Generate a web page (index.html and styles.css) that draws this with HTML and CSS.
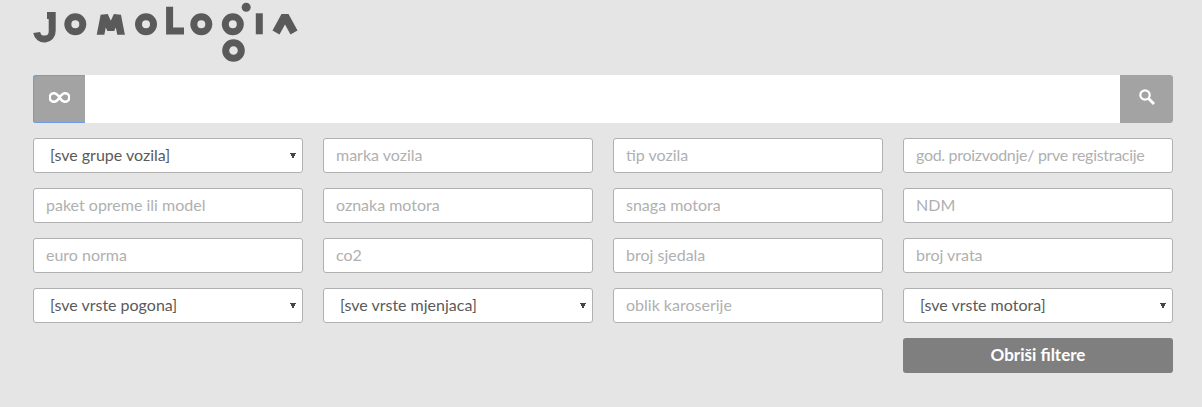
FILE: index.html
```html
<!DOCTYPE html>
<html lang="hr">
<head>
<meta charset="utf-8">
<title>Jomologija</title>
<link rel="stylesheet" href="styles.css">
</head>
<body>
<div class="page">
  <header class="brand">
    <svg class="logo" width="266" height="62" viewBox="0 0 266 62" role="img" aria-label="Jomologija">
      <defs><clipPath id="m-clip"><rect x="60" y="10" width="36" height="24.800"/></clipPath></defs>
      <g fill="none" stroke="#5a5a5a" stroke-width="7">
        <path d="M14 15.500H19.200V31a7.800 7.800 0 0 1-15.500 1.500"/>
        <circle cx="42.300" cy="24.200" r="7.500"/>
        <path clip-path="url(#m-clip)" stroke-linejoin="bevel" stroke-width="7.500" d="M66.500 40L71.300 15.500L77.800 29.500L84.300 15.500L89.100 40"/>
        <circle cx="113" cy="24.200" r="7.500"/>
        <path d="M136.600 6.700V31H151"/>
        <circle cx="168.300" cy="24.200" r="7.500"/>
        <circle cx="199.800" cy="24.200" r="7.500"/>
        <circle cx="200.500" cy="50.500" r="7.800"/>
        <path d="M226.300 13.300V34.300"/>
        <path stroke-linejoin="bevel" stroke-width="8" d="M243 32.500L252 16L261 32.500"/>
      </g>
      <circle cx="213.200" cy="7.200" r="4.500" fill="#5a5a5a"/>
    </svg>
  </header>

  <div class="search">
    <button class="search-mode" type="button" aria-label="Sve">
      <svg width="21" height="11" viewBox="0 0 21 11"><path d="M10.500 5.500C8.500 2.500 7 1.200 5 1.200a4.300 4.300 0 0 0 0 8.600C7 9.800 8.500 8.500 10.500 5.500C12.500 2.500 14 1.200 16 1.200a4.300 4.300 0 0 1 0 8.600C14 9.800 12.500 8.500 10.500 5.500Z" fill="none" stroke="#fff" stroke-width="2.500"/></svg>
    </button>
    <input class="search-input" type="text">
    <button class="search-go" type="button" aria-label="Traži">
      <svg width="16" height="16" viewBox="0 0 16 16"><circle cx="6" cy="6" r="4.700" fill="none" stroke="#fff" stroke-width="2.200"/><path d="M9.500 9.500L15 15" stroke="#fff" stroke-width="2.800"/></svg>
    </button>
  </div>

  <form class="filters">
    <select class="field field-select"><option>[sve grupe vozila]</option></select>
    <input class="field" placeholder="marka vozila">
    <input class="field" placeholder="tip vozila">
    <input class="field field-tight" placeholder="god. proizvodnje/ prve registracije">
    <input class="field" placeholder="paket opreme ili model">
    <input class="field" placeholder="oznaka motora">
    <input class="field" placeholder="snaga motora">
    <input class="field" placeholder="NDM">
    <input class="field" placeholder="euro norma">
    <input class="field" placeholder="co2">
    <input class="field" placeholder="broj sjedala">
    <input class="field" placeholder="broj vrata">
    <select class="field field-select"><option>[sve vrste pogona]</option></select>
    <select class="field field-select"><option>[sve vrste mjenjaca]</option></select>
    <input class="field" placeholder="oblik karoserije">
    <select class="field field-select"><option>[sve vrste motora]</option></select>
    <button class="clear" type="button">Obriši filtere</button>
  </form>
</div>
</body>
</html>
```
FILE: styles.css
```css
* { box-sizing: border-box; }
html, body { margin: 0; height: 100%; }
body { background: #e5e5e5; font-family: "Lato", "Liberation Sans", sans-serif; overflow: hidden; }
.page { padding: 0 29px 0 33px; }
.brand { height: 75px; }
.logo { display: block; }
.search { display: flex; height: 48px; background: #fff; border-radius: 3px; }
.search-mode, .search-go { border: 0; padding: 0; background: #a3a3a3; color: #fff; display: flex; align-items: center; justify-content: center; }
.search-mode { width: 52px; box-shadow: inset 1px 1px 0 #6f9ae8, inset 0 -1px 0 #6f9ae8; border-radius: 3px 0 0 3px; padding-bottom: 4px; }
.search-input { flex: 1; border: 0; background: #fff; outline: 0; }
.search-go { width: 53px; border-radius: 0 3px 3px 0; padding-bottom: 5px; }
.filters { display: grid; grid-template-columns: repeat(4, 270px); column-gap: 20px; row-gap: 15px; margin-top: 15px; }
.field { height: 35px; width: 100%; border: 1px solid #b0b0b0; border-radius: 3px; background: #fff; padding: 0 12px 2px; font: 16px "Lato", "Liberation Sans", sans-serif; color: #5a5a5a; outline: 0; }
.field::placeholder { color: #b0b0b0; opacity: 1; }
.field-tight { letter-spacing: -0.3px; }
.field-select { appearance: none; padding-left: 16px; background-image: linear-gradient(to bottom left, #444 50%, transparent 50%), linear-gradient(to bottom right, #444 50%, transparent 50%); background-size: 3px 6px, 3px 6px; background-position: right 9px top 14px, right 6px top 14px; background-repeat: no-repeat; }
.clear { grid-column: 4; height: 35px; border: 0; border-radius: 3px; background: #7f7f7f; color: #fff; font: 700 17px "Lato", "Liberation Sans", sans-serif; padding: 0 0 2px; }
```
